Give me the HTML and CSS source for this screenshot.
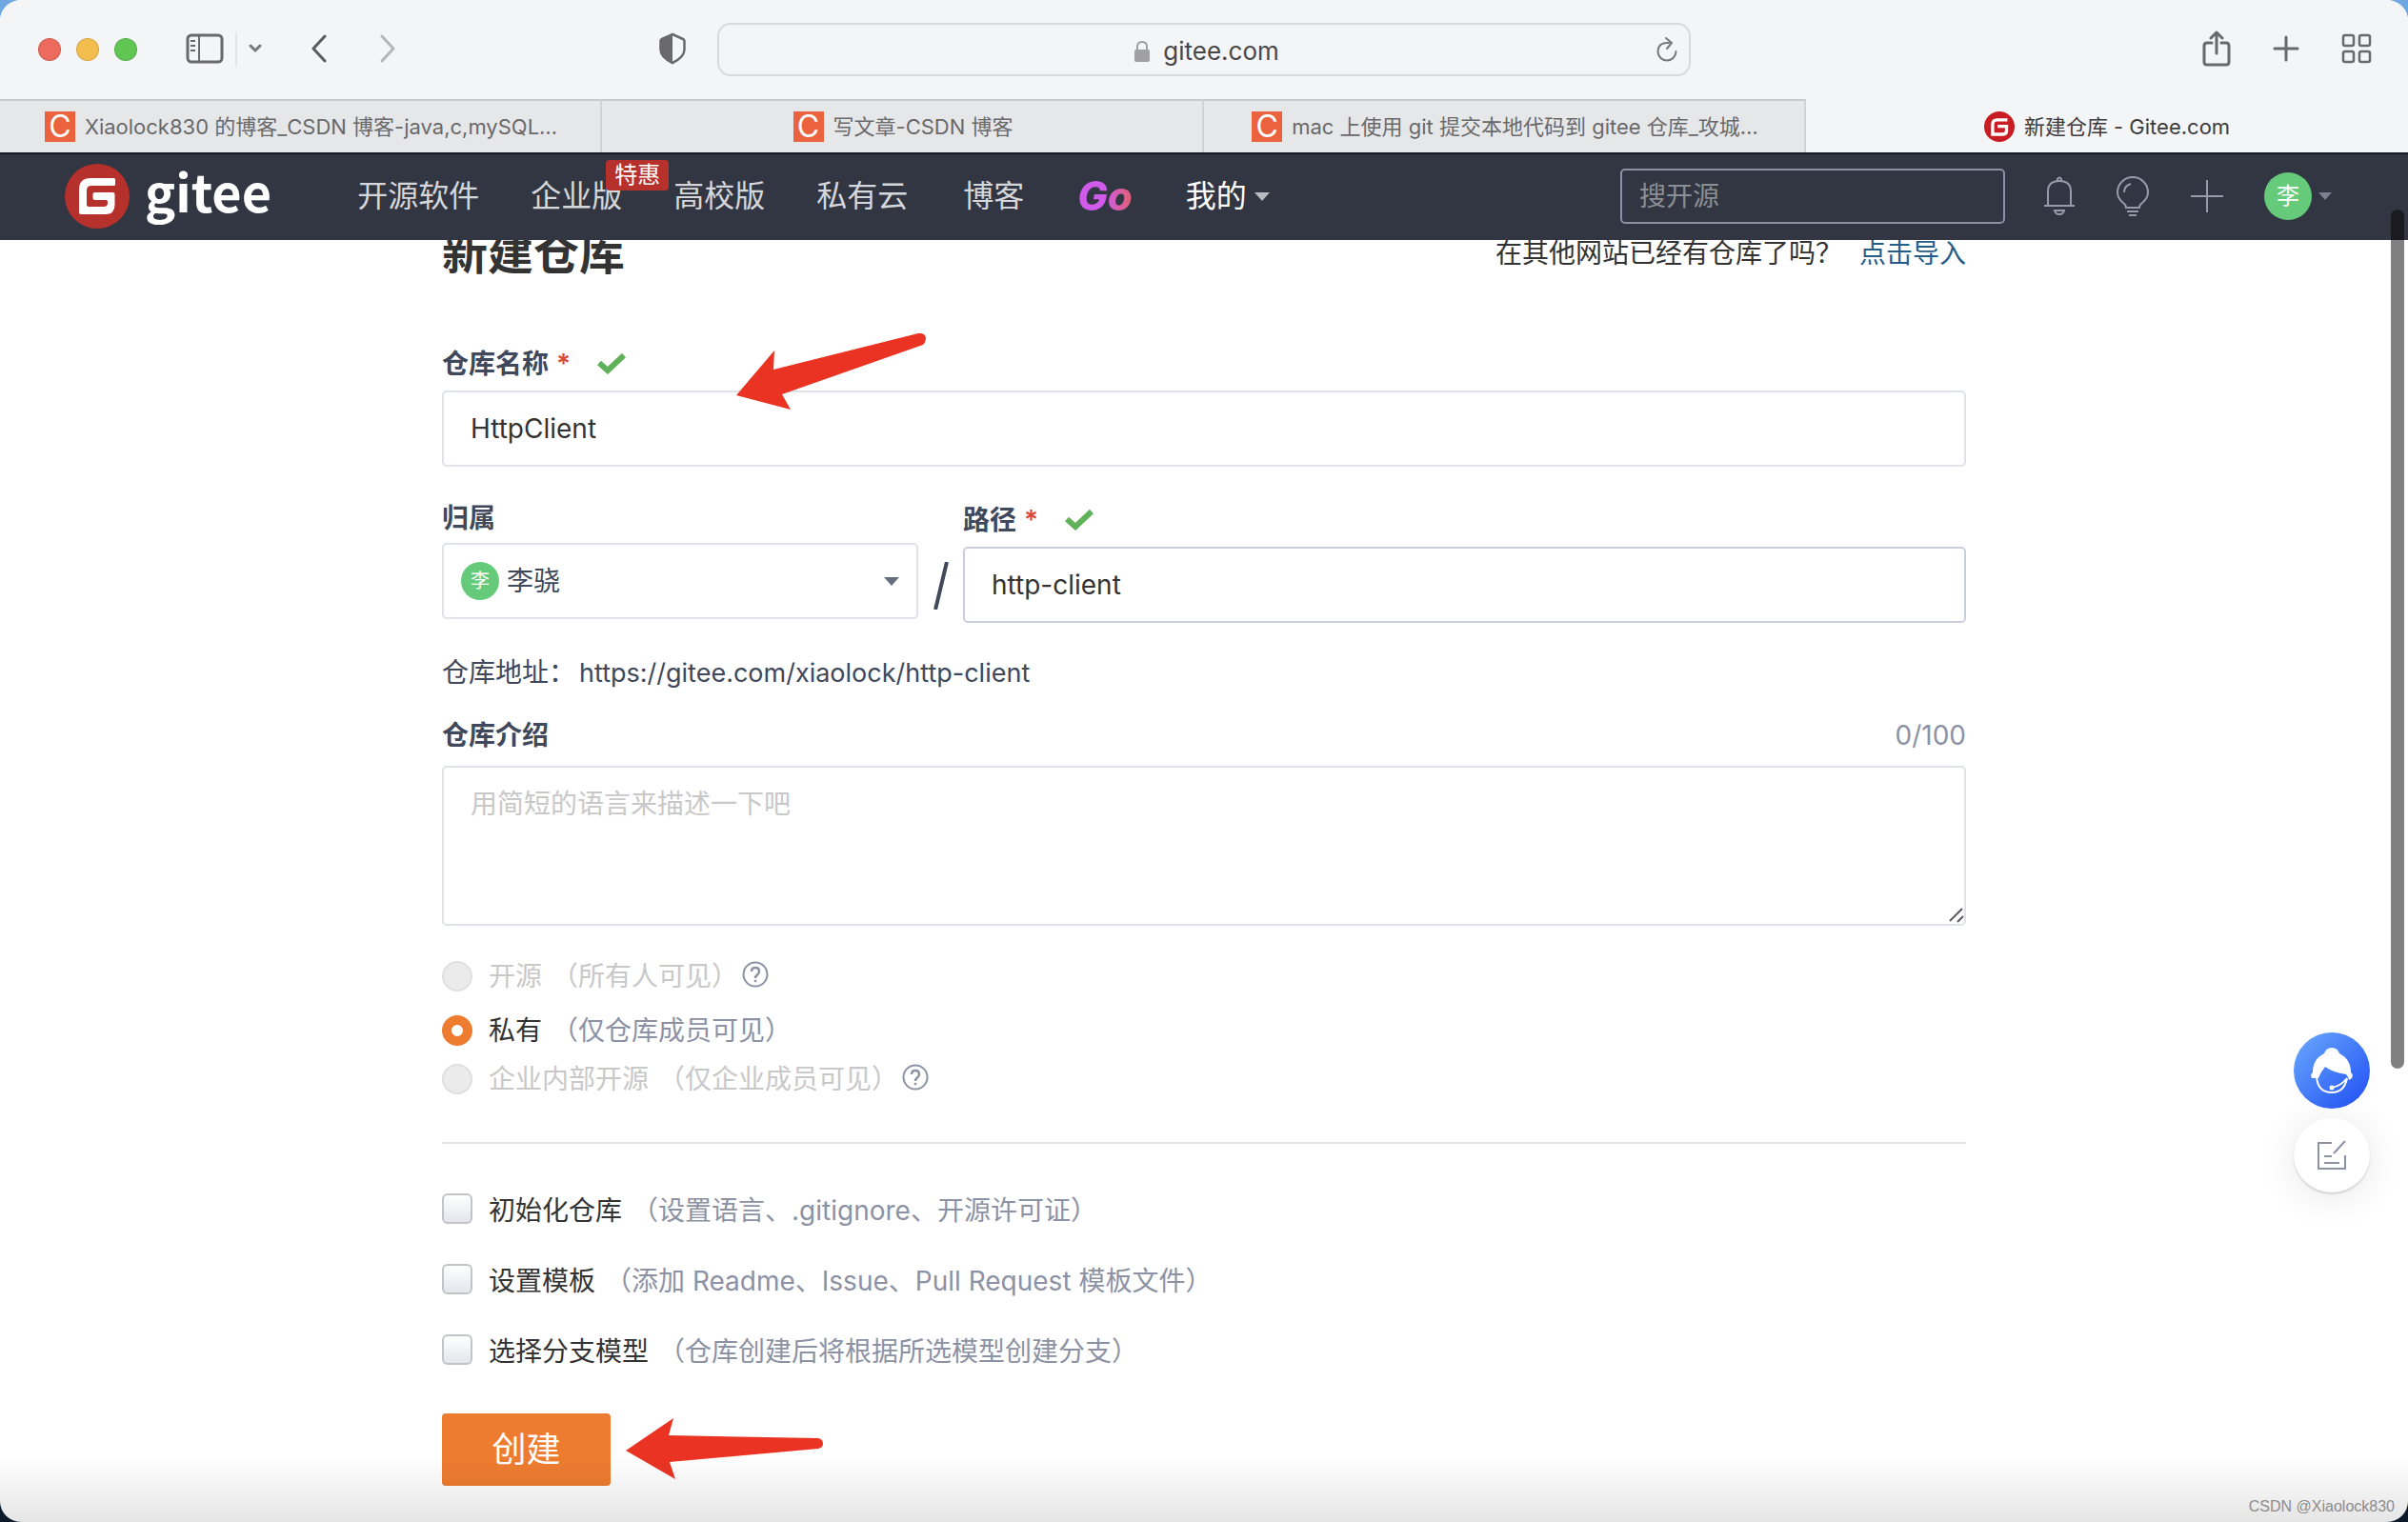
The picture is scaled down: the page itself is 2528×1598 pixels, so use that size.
FILE: index.html
```html
<!DOCTYPE html>
<html lang="zh-CN">
<head>
<meta charset="utf-8">
<title>新建仓库 - Gitee.com</title>
<link rel="stylesheet" href="styles.css">
</head>
<body>
<div class="window">
  <div class="toolbar">
    <div class="lights"><span class="light red"></span><span class="light yellow"></span><span class="light green"></span></div>
    <div class="side-tools">
      <button class="tool" aria-label="边栏"><svg width="40" height="32" viewBox="0 0 40 32" fill="none" stroke="#69696b" stroke-width="3"><rect x="2" y="2" width="36" height="28" rx="4"/><path d="M14 2v28" stroke-width="2"/><path d="M5 8h5M5 13h5M5 18h5" stroke-width="2"/></svg></button>
      <span class="split"></span>
      <button class="tool" aria-label="标签组"><svg width="14" height="10" viewBox="0 0 14 10" fill="none" stroke="#77777a" stroke-width="3" stroke-linecap="round" stroke-linejoin="round"><path d="M2 2l5 5 5-5"/></svg></button>
    </div>
    <div class="history">
      <button class="tool" aria-label="后退"><svg width="18" height="30" viewBox="0 0 18 30" fill="none" stroke="#5c5c5e" stroke-width="3" stroke-linecap="round" stroke-linejoin="round"><path d="M15 2L3 15l12 13"/></svg></button>
      <button class="tool" aria-label="前进"><svg width="18" height="30" viewBox="0 0 18 30" fill="none" stroke="#b5b6b8" stroke-width="3" stroke-linecap="round" stroke-linejoin="round"><path d="M3 2l12 13L3 28"/></svg></button>
    </div>
    <button class="tool shield" aria-label="隐私报告"><svg width="28" height="34" viewBox="0 0 28 34"><path d="M14 2l11 5q1.500 .500 1.500 2v9q0 8-12.500 14Q1.500 26 1.500 18V9q0-1.500 1.500-2z" fill="none" stroke="#69696b" stroke-width="2.500"/><path d="M14 1v32Q1 26 1 18V9q0-2 2-3z" fill="#69696b"/></svg></button>
    <button class="address">
      <svg width="16" height="24" viewBox="0 0 16 24"><path d="M3 11V7q0-5 5-5t5 5v4" fill="none" stroke="#a0a0a2" stroke-width="2"/><rect y="10" width="16" height="13" rx="2" fill="#a0a0a2"/></svg>
      <span>gitee.com</span>
      <svg class="reload" width="22" height="28" viewBox="0 0 22 28" fill="none" stroke="#77777a" stroke-width="2" stroke-linecap="round" stroke-linejoin="round"><path d="M13 7Q2 6 1.500 16a9.500 9.500 0 0 0 19 0M10 2l6 5-5 6"/></svg>
    </button>
    <div class="window-tools">
      <button class="tool" aria-label="共享"><svg width="30" height="38" viewBox="0 0 30 38" fill="none" stroke="#69696b" stroke-width="3" stroke-linecap="round" stroke-linejoin="round"><path d="M10 13H5q-3 0-3 3v17q0 3 3 3h20q3 0 3-3V16q0-3-3-3h-5M15 24V2M9 8l6-6 6 6"/></svg></button>
      <button class="tool" aria-label="新标签页"><svg width="28" height="28" viewBox="0 0 28 28" stroke="#69696b" stroke-width="3" stroke-linecap="round"><path d="M14 2v24M2 14h24"/></svg></button>
      <button class="tool" aria-label="标签页概览"><svg width="32" height="32" viewBox="0 0 32 32" fill="none" stroke="#69696b" stroke-width="2.500"><rect x="2" y="2" width="11" height="11" rx="2"/><rect x="19" y="2" width="11" height="11" rx="2"/><rect x="2" y="19" width="11" height="11" rx="2"/><rect x="19" y="19" width="11" height="11" rx="2"/></svg></button>
    </div>
  </div>
  <nav class="tabs" aria-label="标签页">
    <a class="tab" href="#"><span class="csdn">C</span><span>Xiaolock830 的博客_CSDN 博客-java,c,mySQL…</span></a>
    <a class="tab" href="#"><span class="csdn">C</span><span>写文章-CSDN 博客</span></a>
    <a class="tab" href="#"><span class="csdn">C</span><span>mac 上使用 git 提交本地代码到 gitee 仓库_攻城…</span></a>
    <a class="tab active" href="#"><svg width="32" height="32" viewBox="0 0 68 68"><circle cx="34" cy="34" r="34" fill="#c71d23"/><path d="M52 19H29q-10 0-10 10v22h23q8 0 8-8V33H30" fill="none" stroke="#fff" stroke-width="7"/></svg><span>新建仓库 - Gitee.com</span></a>
  </nav>

  <header class="site-header">
    <a class="logo" href="#" aria-label="gitee">
      <svg width="68" height="68" viewBox="0 0 68 68"><circle cx="34" cy="34" r="34" fill="#b7312c"/><path d="M51.500 15H27q-12 0-12 12v24q0 2 2 2h25.500q10 0 10-10V32q0-2-2-2H31.500q-2 0-2 2v4q0 2 2 2H43q2 0 2 2v1q0 4-4 4H25q-2 0-2-2V28q0-5 5-5h23.500q1.500 0 1.500-1.500v-5q0-1.500-1.500-1.500z" fill="#fff"/></svg>
      <span>gitee</span>
    </a>
    <nav class="menu">
      <a href="#">开源软件</a>
      <a class="enterprise" href="#">企业版<em>特惠</em></a>
      <a href="#">高校版</a>
      <a href="#">私有云</a>
      <a class="blog" href="#">博客</a>
      <a class="go" href="#">Go</a>
      <a class="mine" href="#">我的<i class="caret"></i></a>
    </nav>
    <div class="account">
      <input class="search" type="search" placeholder="搜开源" aria-label="搜开源">
      <button class="head-btn" aria-label="通知"><svg width="34" height="42" viewBox="0 0 34 42" fill="none" stroke="#959bab" stroke-width="2"><path d="M5 31V16Q5 5 17 5t12 11v15M1 31h32M15 5V3q2-3 4 0v2M12 36h10q-1 4-5 4t-5-4z"/></svg></button>
      <button class="head-btn" aria-label="建议"><svg width="36" height="44" viewBox="0 0 36 44" fill="none" stroke="#959bab" stroke-width="2"><path d="M11 34q0-3-3-5-6-5-6-11a16 16 0 0 1 32 0q0 6-6 11-3 2-3 5zM12 38h12M14 42h8"/><path d="M9 18q0-7 7-9"/></svg></button>
      <button class="head-btn" aria-label="新建"><svg width="36" height="36" viewBox="0 0 36 36" stroke="#959bab" stroke-width="2"><path d="M18 1v34M1 18h34"/></svg></button>
      <button class="user" aria-label="李骁"><span class="avatar">李</span><i class="caret"></i></button>
    </div>
  </header>

  <main class="content">
    <div class="title-row">
      <h1>新建仓库</h1>
      <p>在其他网站已经有仓库了吗？<a href="#">点击导入</a></p>
    </div>
    <form>
      <div class="field">
        <label for="name">仓库名称<b>*</b><svg class="tick" width="30" height="22" viewBox="0 0 30 22" fill="none" stroke="#5fb25a" stroke-width="6"><path d="M2 10l9 8L28 2"/></svg></label>
        <input class="box" id="name" type="text" value="HttpClient">
      </div>
      <div class="path-row">
        <div class="owner">
          <label for="owner">归属</label>
          <div class="select-wrap">
            <select class="box" id="owner"><option>李骁</option></select>
            <span class="avatar small">李</span>
            <i class="caret"></i>
          </div>
        </div>
        <svg class="slash" width="16" height="50" viewBox="0 0 16 50" stroke="#40485b" stroke-width="4"><path d="M14 0L2 50"/></svg>
        <div class="field path">
          <label for="path">路径<b>*</b><svg class="tick" width="30" height="22" viewBox="0 0 30 22" fill="none" stroke="#5fb25a" stroke-width="6"><path d="M2 10l9 8L28 2"/></svg></label>
          <input class="box strong" id="path" type="text" value="http-client">
        </div>
      </div>
      <p class="url">仓库地址：<span>https://gitee.com/xiaolock/http-client</span></p>
      <div class="intro-head"><label for="intro">仓库介绍</label><span>0/100</span></div>
      <div class="intro-box">
        <textarea class="box" id="intro" placeholder="用简短的语言来描述一下吧"></textarea>
        <svg class="grip" width="16" height="16" viewBox="0 0 16 16" stroke="#5a5a5a" stroke-width="2"><path d="M1 14L14 1M9 15l6-6"/></svg>
      </div>

      <div class="visibility">
        <div class="option open"><input type="radio" name="vis" id="v1" disabled><label for="v1">开源<small>（所有人可见）</small></label><svg width="28" height="28" viewBox="0 0 28 28" fill="none" stroke="#8c92a4" stroke-width="2"><circle cx="14" cy="14" r="12.500"/><path d="M10 11q0-4 4-4t4 4q0 2-2 3.500T14 18" stroke-width="2.500"/><circle cx="14" cy="21" r="1" fill="#8c92a4" stroke-width="1"/></svg></div>
        <div class="option"><input type="radio" name="vis" id="v2" checked><label for="v2">私有<small>（仅仓库成员可见）</small></label></div>
        <div class="option inner"><input type="radio" name="vis" id="v3" disabled><label for="v3">企业内部开源<small>（仅企业成员可见）</small></label><svg width="28" height="28" viewBox="0 0 28 28" fill="none" stroke="#8c92a4" stroke-width="2"><circle cx="14" cy="14" r="12.500"/><path d="M10 11q0-4 4-4t4 4q0 2-2 3.500T14 18" stroke-width="2.500"/><circle cx="14" cy="21" r="1" fill="#8c92a4" stroke-width="1"/></svg></div>
      </div>
      <hr>
      <div class="setup">
        <div class="option"><input type="checkbox" id="c1"><label for="c1">初始化仓库<small>（设置语言、.gitignore、开源许可证）</small></label></div>
        <div class="option"><input type="checkbox" id="c2"><label for="c2">设置模板<small>（添加 Readme、Issue、Pull Request 模板文件）</small></label></div>
        <div class="option"><input type="checkbox" id="c3"><label for="c3">选择分支模型<small>（仓库创建后将根据所选模型创建分支）</small></label></div>
      </div>
      <button class="create" type="submit">创建</button>
    </form>
    <svg class="arrow arrow-name" width="200" height="80" viewBox="0 0 200 80" fill="#ea3323"><path d="M0 65L40 18l-1 20L191 0q6-1 8 4 0 5-3 8L48 64l9 16z"/></svg>
    <svg class="arrow arrow-create" width="207" height="64" viewBox="0 0 207 64" fill="#ea3323"><path d="M0 34L50 0l-5 18 157 3q5 1 5 6 0 4-5 5L46 46l6 18z"/></svg>
  </main>

  <div class="fade"></div>
  <div class="scrollbar"></div>
  <div class="floating">
    <button class="support" aria-label="客服"><svg width="80" height="80" viewBox="0 0 80 80"><path d="M19 48q-2-4 1-6 0-14 12-20 2-6 8-6t8 6q12 6 12 20 3 2 1 6l-3 2q-1-4-3-6-14-2-22-8-5 6-7 12l-2 0z" fill="#fff"/><path d="M24 46q1 17 16 17 13 0 16-15-6 8-16 10" fill="none" stroke="#fff" stroke-width="2"/><circle cx="40" cy="58" r="2.500" fill="#fff"/></svg></button>
    <button class="feedback" aria-label="反馈"><svg width="32" height="32" viewBox="0 0 32 32" fill="none" stroke="#8c92a4" stroke-width="2"><path d="M16 3H2v27h28V16M18 14L30 1M8 17h8M8 24h16"/></svg></button>
  </div>
  <div class="watermark">CSDN @Xiaolock830</div>
</div>
</body>
</html>
```
FILE: styles.css
```css
* { box-sizing: border-box; }
body {
  margin: 0;
  background: linear-gradient(#6fa8e0 0, #6fa8e0 50%, #0b1a2b 50%);
  font-family: Inter, "Noto Sans CJK SC", sans-serif;
  font-size: 28px;
  line-height: 40px;
  color: #40485b;
}
button { border: 0; padding: 0; background: none; font: inherit; color: inherit; }
a { color: inherit; text-decoration: none; }
svg { display: block; flex: none; }
p, h1 { margin: 0; }

.window {
  position: relative;
  min-height: 100vh;
  overflow: hidden;
  border-radius: 22px;
  background: #fff;
}

/* browser toolbar */
.toolbar {
  display: flex;
  align-items: center;
  height: 104px;
  padding: 0 38px 0 40px;
  background: #f4f5f7;
}
.lights { display: flex; gap: 16px; }
.light { width: 24px; height: 24px; border-radius: 50%; border: 1px solid #0002; }
.red { background: #ec6a5e; }
.yellow { background: #f4be4f; }
.green { background: #61c554; }
.side-tools { display: flex; align-items: center; gap: 12px; margin-left: 51px; }
.split { width: 2px; height: 36px; background: #e3e4e6; }
.history { display: flex; gap: 54px; margin-left: 51px; }
.tool { padding-bottom: 2px; }
.shield { margin-left: 276px; }
.address {
  position: relative;
  display: flex;
  align-items: center;
  justify-content: center;
  gap: 14px;
  flex: 0 1 1022px;
  height: 56px;
  margin-left: 33px;
  padding: 4px 0 0 6px;
  border: 2px solid #d9dadc;
  border-radius: 14px;
  font-size: 26px;
  color: #48484a;
}
.reload { position: absolute; right: 12px; top: 12px; }
.window-tools { display: flex; align-items: center; gap: 44px; margin-left: auto; }

.tabs { display: grid; grid-template-columns: repeat(4, 1fr); height: 56px; }
.tab {
  display: flex;
  align-items: center;
  justify-content: center;
  gap: 10px;
  padding-left: 2px;
  border-top: 2px solid #c9cacc;
  border-right: 2px solid #d2d3d5;
  background: #e6e7e9;
  font-size: 22px;
  white-space: nowrap;
  color: #69696b;
}
.active { border-color: #f4f5f7; background: #f4f5f7; color: #3c3c3e; }
.csdn {
  width: 32px;
  height: 32px;
  background: #eb623f;
  color: #fff;
  font-size: 32px;
  line-height: 32px;
  text-align: center;
}

/* site header */
.site-header {
  position: relative;
  z-index: 1;
  display: flex;
  align-items: center;
  height: 92px;
  padding: 0 80px 2px 68px;
  border-top: 2px solid #141c26;
  background: #323642;
  color: #d6d7da;
}
.logo { display: flex; align-items: center; gap: 16px; flex: 0 0 217px; color: #fff; }
.logo span { font: 700 54px/68px "Noto Sans CJK SC", sans-serif; height: 80px; }
.menu { display: flex; align-items: center; margin-left: 90px; gap: 54px; font-size: 32px; white-space: nowrap; }
.enterprise { position: relative; }
.enterprise em {
  position: absolute;
  left: 79px;
  top: -18px;
  width: 66px;
  height: 32px;
  border-radius: 4px;
  background: #b7312c;
  color: #fff;
  font-size: 24px;
  font-style: normal;
  line-height: 32px;
  text-align: center;
}
.blog { margin-left: 4px; }
.go {
  margin: 0 2px;
  background: linear-gradient(90deg, #cf5be8 50%, #e0606e);
  background-clip: text;
  color: transparent;
  font-size: 42px;
  font-weight: 800;
  font-style: italic;
}
.mine { display: flex; align-items: center; gap: 8px; color: #fff; }
.caret {
  width: 0;
  border: 8px solid transparent;
  border-top: 9px solid #b9bbc1;
  border-bottom: 0;
}
.account { display: flex; align-items: center; margin-left: auto; }
.search {
  width: 404px;
  height: 58px;
  margin-right: 40px;
  padding: 0 18px;
  border: 2px solid #8c92a4;
  border-radius: 5px;
  background: transparent;
  font: inherit;
  outline: 0;
}
.search::placeholder { color: #8b8e93; }
.head-btn { margin-right: 42px; }
.user { display: flex; align-items: center; gap: 7px; }
.user .caret { border-width: 8px 7px 0; border-top-color: #7c8190; }
.avatar {
  width: 50px;
  height: 50px;
  border-radius: 50%;
  background: #65cb7b;
  color: #fff;
  font-size: 24px;
  line-height: 50px;
  text-align: center;
}

/* form */
.content { position: relative; width: min(1600px, 90%); margin: -18px auto 0; padding-bottom: 38px; }
.title-row { display: flex; align-items: center; justify-content: space-between; margin-bottom: 64px; color: #333; }
h1 { font-size: 48px; font-weight: 600; line-height: 64px; }
.title-row a { margin-left: 18px; color: #265c8a; }
.field label { display: flex; align-items: center; margin-bottom: 8px; font-weight: 600; }
.field b { margin-left: 8px; font-weight: 600; color: #db4a38; }
.tick { margin-left: 28px; }
.box {
  display: block;
  width: 100%;
  height: 80px;
  padding: 0 28px;
  border: 2px solid #dfe3e9;
  border-radius: 5px;
  background: #fff;
  color: #333;
  font: inherit;
  outline: 0;
}
.strong { border-color: #cbcfdb; }
.path-row { display: flex; align-items: flex-start; margin-top: 36px; }
.owner { flex: 0 1 500px; }
.owner label { display: block; margin-bottom: 8px; font-weight: 600; line-height: 36px; }
.select-wrap { position: relative; }
.select-wrap select { appearance: none; padding-left: 66px; color: #40485b; }
.small { position: absolute; left: 20px; top: 20px; width: 40px; height: 40px; font-size: 20px; line-height: 40px; }
.select-wrap .caret { position: absolute; right: 20px; top: 36px; border-top-color: #666d7d; }
.slash { margin: 64px 15px 0 16px; }
.path { flex: 1; }
.url { margin-top: 32px; }
.url span { margin-left: 4px; font-size: 27px; line-height: 20px; }
.intro-head { display: flex; justify-content: space-between; margin: 26px 0 12px; color: #8c92a4; }
.intro-head label { color: #40485b; font-weight: 600; }
.intro-box { position: relative; }
textarea.box { height: 168px; padding: 18px 28px; resize: none; }
textarea::placeholder { color: #c8c8c8; }
.grip { position: absolute; right: 2px; bottom: 3px; }

.option { display: flex; align-items: center; color: #333; white-space: nowrap; }
.option input { appearance: none; width: 32px; height: 32px; margin: 0 17px 0 0; }
.option small { margin-left: 10px; font-size: 28px; color: #8c92a4; }
.option svg { margin: 0 0 4px 4px; }
.option input[type="radio"] { border: 2px solid #dfdfdf; border-radius: 50%; background: #ebebeb; }
.option input[type="radio"]:checked { border: 10px solid #ee7c30; background: #fff; }
.option input:disabled + label, .option input:disabled + label small { color: #c8c8c8; }
.visibility { margin-top: 33px; }
.open { margin-bottom: 17px; }
.inner { margin-top: 11px; }
hr { height: 2px; margin: 46px 0 50px; border: 0; background: #dfe3e9; }
.setup { display: grid; gap: 34px; }
.option input[type="checkbox"] {
  margin-bottom: 4px;
  border: 2px solid #c3c4c9;
  border-radius: 6px;
  background: linear-gradient(#fff, #e4e6ec);
}
.create {
  width: 177px;
  height: 76px;
  margin-top: 45px;
  border-radius: 4px;
  background: #ee7c30;
  color: #fff;
  font-size: 36px;
}

/* overlays */
.arrow { position: absolute; }
.arrow-name { left: 309px; top: 116px; }
.arrow-create { left: 193px; bottom: 45px; }
.fade { position: absolute; inset: auto 0 0; height: 70px; background: linear-gradient(transparent, #0000001a); pointer-events: none; }
.scrollbar { position: absolute; z-index: 2; right: 4px; top: 220px; width: 14px; height: 902px; border-radius: 7px; background: #0000007f; }
.floating { position: absolute; right: 40px; top: 1084px; display: grid; gap: 10px; }
.floating button { display: grid; place-items: center; width: 80px; height: 80px; border-radius: 50%; }
.support { background: linear-gradient(135deg, #6aaafc, #1f4df5); }
.floating .feedback { height: 78px; background: #fff; box-shadow: 0 2px 2px #0002, 0 4px 40px #0000001a; }
.watermark { position: absolute; right: 14px; bottom: 4px; font: 16px/24px "Liberation Sans", sans-serif; color: #8c8c8c; }
```
